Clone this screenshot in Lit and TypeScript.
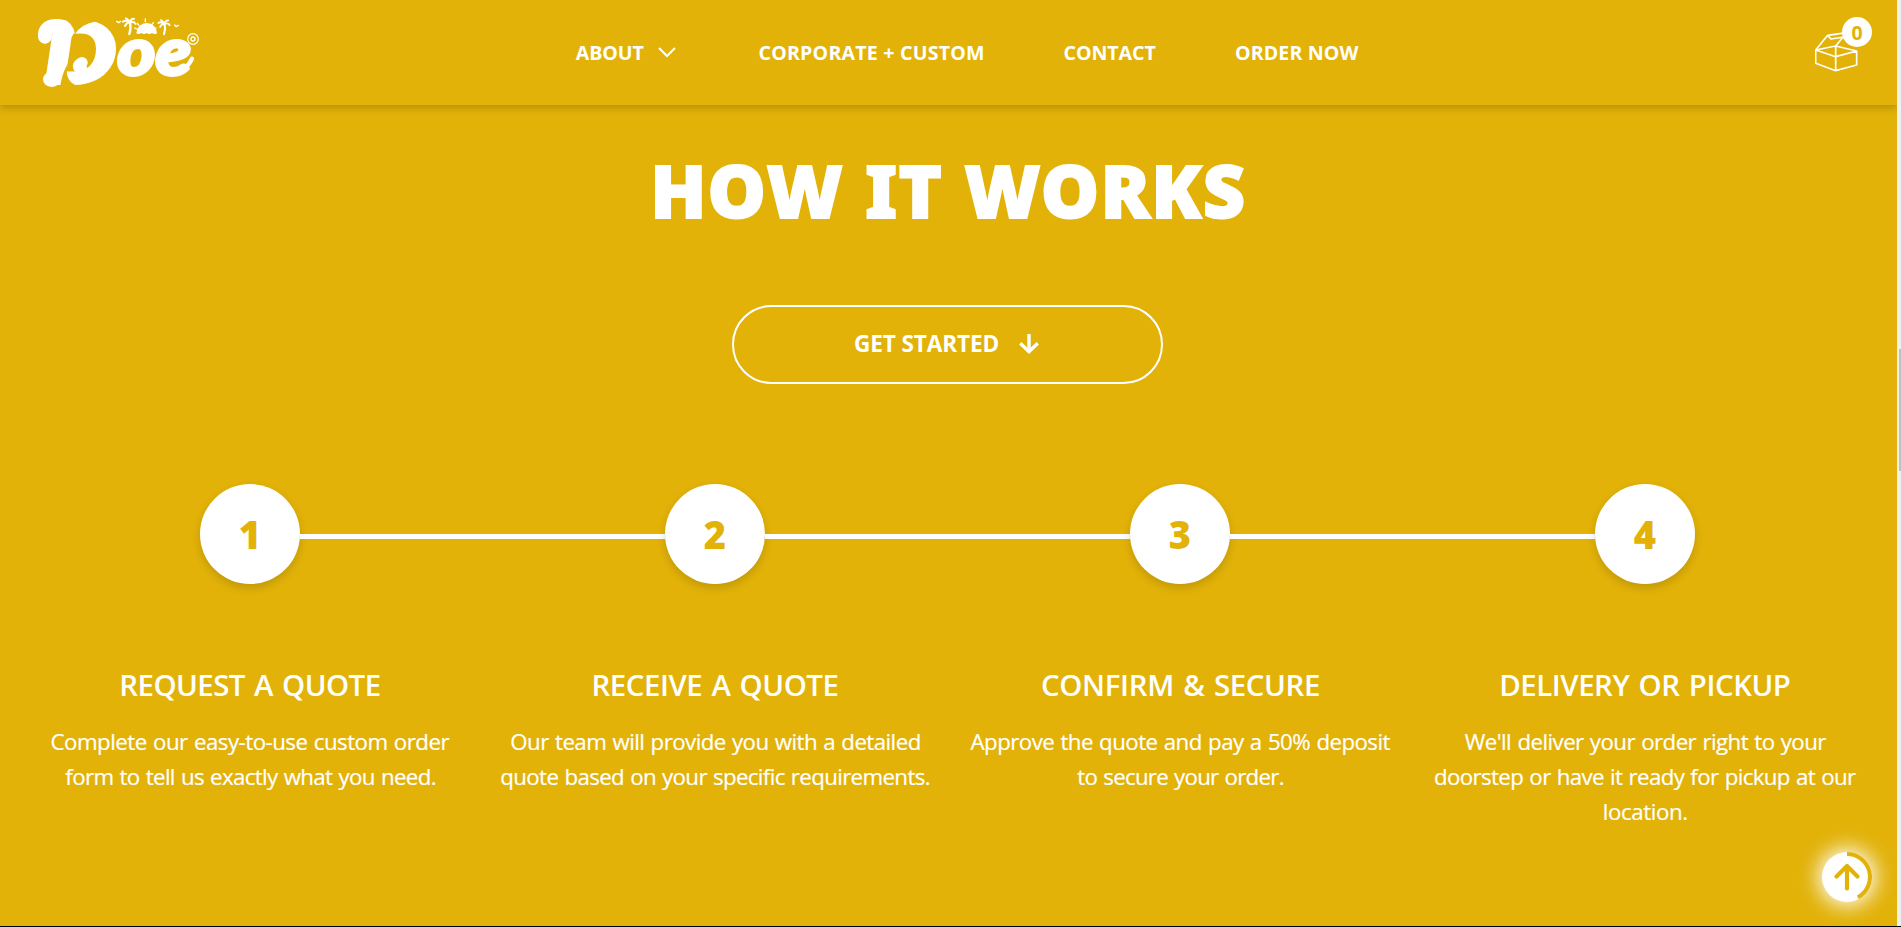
import { LitElement, html, css, svg } from "lit";
import { customElement, property } from "lit/decorators.js";
import { styleMap } from "lit/directives/style-map.js";

const FONT = '"Open Sans", "Noto Sans", sans-serif';
const ruler = document.createElement("canvas").getContext("2d")!;

/** A single line of text tracked so that it fills the given width. */
@customElement("fit-line")
class FitLine extends LitElement {
  static styles = css`
    :host { display: block; }
    .line { white-space: pre; }
  `;
  @property() text = "";
  @property({ type: Number }) width = 0;
  @property({ type: Number }) size = 16;
  @property({ type: Number }) weight = 400;
  @property({ type: Number }) word = 0;
  @property() family = FONT;

  render() {
    ruler.font = `${this.weight} ${this.size}px ${this.family}`;
    const m = ruler.measureText(this.text);
    const spaces = this.text.split(" ").length - 1;
    const ink = m.actualBoundingBoxRight + m.actualBoundingBoxLeft + spaces * this.word;
    const gap = this.text.length > 1 ? (this.width - ink) / (this.text.length - 1) : 0;
    return html`<div class="line" style=${styleMap({
      width: `${this.width}px`,
      textIndent: `${m.actualBoundingBoxLeft}px`,
      letterSpacing: `${gap.toFixed(3)}px`,
      wordSpacing: `${this.word}px`,
      fontFamily: this.family,
      fontSize: `${this.size}px`,
      fontWeight: String(this.weight),
    })}>${this.text}</div>`;
  }
}

type Line = [string, number];
const STEPS: { title: Line; body: Line[] }[] = [
  { title: ["REQUEST A QUOTE", 258.3], body: [["Complete our easy-to-use custom order", 398], ["form to tell us exactly what you need.", 370.3]] },
  { title: ["RECEIVE A QUOTE", 244], body: [["Our team will provide you with a detailed", 408.3], ["quote based on your specific requirements.", 428.3]] },
  { title: ["CONFIRM & SECURE", 277], body: [["Approve the quote and pay a 50% deposit", 420], ["to secure your order.", 206.3]] },
  { title: ["DELIVERY OR PICKUP", 288.7], body: [["We'll deliver your order right to your", 361.5], ["doorstep or have it ready for pickup at our", 421], ["location.", 83.3]] },
];

const palm = svg`
  <path d="M0 36 Q6 18 2 3" stroke-width="7"/>
  <path d="M2 3 Q-8 -8 -19 -1 M2 3 Q-8 0 -13 12 M2 3 Q3 -10 14 -10 M2 3 Q12 -4 19 6 M2 3 Q-3 -8 -10 -11" stroke-width="6"/>`;

@customElement("app-root")
class AppRoot extends LitElement {
  static styles = css`
    :host { display: block; }
    * { box-sizing: border-box; }
    .page {
      display: grid; grid-template-columns: 1fr 4px; grid-template-rows: 926px 1px;
      width: 100%; height: 927px; overflow: hidden; position: relative;
      background: #e2b209; color: #fff; font-family: "Open Sans", "Noto Sans", sans-serif;
    }
    .content { overflow: hidden; }
    .track { background: #f0f0f0; padding: 349px 0 0 2px; }
    .thumb { height: 122px; background: #c1c1c1; }
    .edge { grid-column: 1 / -1; background: #000; }
    header {
      height: 105px; display: grid; grid-template-columns: 575.7px auto 1fr; align-items: center;
      box-shadow: 0 3px 8px rgba(0, 0, 0, 0.2);
    }
    .logo { display: block; width: 200px; height: 105px; margin-left: 20px; }
    .logo text { font-family: Lato, "Open Sans", sans-serif; font-weight: 900; font-style: italic; }
    nav { display: flex; align-items: center; line-height: 30px; }
    .about { display: flex; align-items: center; gap: 14.5px; margin-right: 83.5px; }
    .about svg { display: block; width: 18px; height: 12px; margin-top: -2px; }
    .corp { margin-right: 81.5px; }
    .contact { margin-right: 80.5px; }
    .cart { justify-self: end; align-self: start; margin-right: 25px; width: 57px; height: 58px; position: relative; margin-top: 16px; }
    .cart svg { display: block; width: 57px; height: 58px; }
    .count {
      position: absolute; right: 0; top: 1px; width: 30px; height: 30px; border-radius: 50%;
      background: #fff; color: #e2b209; font-weight: 700; font-size: 19.5px; line-height: 31px; text-align: center;
    }
    .how { display: flex; flex-direction: column; align-items: center; padding-top: 37.3px; }
    .heading { line-height: 96px; height: 96px; margin: 0 0 66.7px 1px; font-weight: inherit; font-size: inherit; -webkit-text-stroke: 1.8px #fff; }
    .cta {
      width: 431px; height: 79px; margin-right: 2px; border: 2px solid #fff; border-radius: 40px; background: none; color: #fff;
      display: flex; align-items: center; justify-content: center; gap: 20.5px; padding: 0 1px 0 0; line-height: 30px;
    }
    .cta svg { display: block; width: 20px; height: 20px; margin-top: -1px; }
    .steps { align-self: stretch; display: flex; align-items: center; margin-top: 100px; padding: 0 202px 0 200px; }
    .dot {
      flex: none; width: 100px; height: 100px; border-radius: 50%; background: #fff; color: #e2b209;
      font-family: "Noto Sans", "Open Sans", sans-serif; font-weight: 900; font-size: 38px; line-height: 101px; text-align: center;
      box-shadow: 0 4px 8px rgba(0, 0, 0, 0.15);
    }
    .bar { flex: 1; height: 5px; margin-top: 5px; background: #fff; }
    .copy { align-self: stretch; display: grid; grid-template-columns: repeat(4, 465px); padding-left: 18px; margin-top: 80.6px; }
    .step { display: flex; flex-direction: column; align-items: center; line-height: 35px; }
    .title { line-height: 40px; margin-bottom: 19.2px; }
    .body { -webkit-text-stroke: 0.2px #fff; }
    .top {
      position: absolute; left: 1822px; top: 852px; width: 50px; height: 50px; border-radius: 50%; background: #fff;
      box-shadow: 0 0 20px 4px rgba(255, 255, 255, 0.95);
    }
    .top svg { display: block; width: 50px; height: 50px; }
  `;

  private logo() {
    return html`<svg class="logo" viewBox="0 0 600 315" fill="#fff" stroke="#fff" stroke-linecap="round" stroke-linejoin="round">
      <g stroke-width="12">
        <text x="72" y="248" font-size="250" textLength="216" lengthAdjust="spacingAndGlyphs">D</text>
        <text x="292" y="225" font-size="200" textLength="222" lengthAdjust="spacingAndGlyphs" stroke-width="9">oe</text>
      </g>
      <g fill="none">
        <path d="M75 110 Q72 80 106 78 Q134 76 140 96" stroke-width="42"/>
        <path d="M90 238 Q94 242 104 236" stroke-width="42"/>
        <path d="M184 205 Q166 200 186 188" stroke-width="34"/>
        <path d="M478 218 Q502 204 516 176" stroke-width="13"/>
        <g transform="translate(328 66)">${palm}</g>
        <g transform="translate(432 70) scale(.9)">${palm}</g>
        <path d="M352 70 L357 76 M376 57 V65 M400 68 L395 75 M344 84 L350 87 M408 84 L402 87" stroke-width="4"/>
        <path d="M290 64 L296 68 L302 64 M464 75 L468 80 L475 76" stroke-width="4"/>
        <circle cx="519" cy="117" r="16" stroke-width="3.5"/>
        <circle cx="519" cy="117" r="6" stroke-width="4"/>
      </g>
      <g fill="#e2b209" stroke="none">
        <path d="M128 48 L128 57 Q158 66 165 102 Q184 72 224 65 L230 48 Z"/>
        <path d="M120 270 Q122 226 146 186 Q128 238 168 256 L168 270 Z"/>
      </g>
      <path d="M349 100 A29 29 0 0 1 411 100 Q404 104 396 99 Q388 105 380 99 Q372 105 364 99 Q356 104 349 100Z" stroke="none"/>
    </svg>`;
  }

  render() {
    const nav = (cls: string, text: string, width: number) =>
      html`<fit-line class=${cls} .text=${text} .width=${width} .size=${19.6} .weight=${700}></fit-line>`;
    return html`<div class="page">
      <div class="content">
        <header>
          ${this.logo()}
          <nav>
            <div class="about">
              ${nav("", "ABOUT", 67.8)}
              <svg viewBox="0 0 18 12" fill="none" stroke="#fff" stroke-width="2"><path d="M1 2 L9 10 L17 2"/></svg>
            </div>
            ${nav("corp", "CORPORATE + CUSTOM", 223.5)}
            ${nav("contact", "CONTACT", 91)}
            ${nav("", "ORDER NOW", 122.5)}
          </nav>
          <div class="cart">
            <svg viewBox="105 48 171 174" fill="none" stroke="#fff" stroke-width="5" stroke-linejoin="round">
              <path d="M107 150 V190 L167 212 L230 195 V153 L167 170 Z M107 150 L167 138 L230 153 M167 138 V212"/>
              <path d="M107 150 L143 106 L200 98 M143 106 L153 117 L192 111 M167 138 L200 98"/>
            </svg>
            <span class="count">0</span>
          </div>
        </header>
        <section class="how">
          <h1 class="heading"><fit-line .text=${"HOW IT WORKS"} .width=${587.5} .size=${73.4} .weight=${900} .word=${1} .family=${'"Noto Sans", "Open Sans", sans-serif'}></fit-line></h1>
          <button class="cta">
            <fit-line .text=${"GET STARTED"} .width=${143.5} .size=${22.6} .weight=${700}></fit-line>
            <svg viewBox="0 0 20 20" fill="none" stroke="#fff" stroke-width="3.4"><path d="M10 0 V18 M1.3 9.2 L10 17.6 L18.7 9.2"/></svg>
          </button>
          <div class="steps">
            ${STEPS.map((_, i) => html`${i ? html`<div class="bar"></div>` : ""}<div class="dot">${i + 1}</div>`)}
          </div>
          <div class="copy">
            ${STEPS.map((s) => html`<div class="step">
              <fit-line class="title" .text=${s.title[0]} .width=${s.title[1]} .size=${29.4} .weight=${600} .word=${2}></fit-line>
              ${s.body.map(([t, w]) => html`<fit-line class="body" .text=${t} .width=${w} .size=${22.3} .word=${1}></fit-line>`)}
            </div>`)}
          </div>
        </section>
      </div>
      <div class="track"><div class="thumb"></div></div>
      <div class="edge"></div>
      <div class="top">
        <svg viewBox="0 0 50 50" fill="none" stroke="#e2b209">
          <path d="M25 2 A23 23 0 0 1 35.8 45.3" stroke-width="4"/>
          <path d="M25 36.5 V14 M14.5 24.5 L25 14 L35.5 24.5" stroke-width="4.2" stroke-linecap="round" stroke-linejoin="round"/>
        </svg>
      </div>
    </div>`;
  }
}
